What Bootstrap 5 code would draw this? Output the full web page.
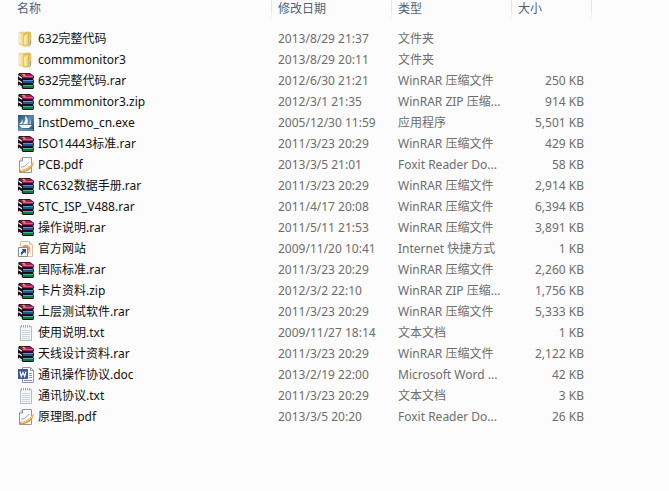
<!DOCTYPE html>
<html lang="zh-CN">
<head>
<meta charset="utf-8">
<meta name="viewport" content="width=device-width, initial-scale=1">
<title>文件列表</title>
<link href="https://cdn.jsdelivr.net/npm/bootstrap@5.3.0/dist/css/bootstrap.min.css" rel="stylesheet">
<style>
body { background: #fcfcfc; font-family: "Noto Sans", "Noto Sans CJK SC", sans-serif; font-size: 12px; line-height: 20px; }
.file-pane { padding-right: 77px; }
.file-list { table-layout: fixed; line-height: 20px; }
.file-list th, .file-list td { padding: 0 8px 0 6px; border: 0; background: transparent; white-space: nowrap; box-shadow: none; }
.file-list th { height: 28px; line-height: 18px; color: #4c607a; font-weight: 400; vertical-align: top;
  background: linear-gradient(#d9e6f2 0, #dfe9f3 10px, #fcfcfc 22px) right top / 1px 22px no-repeat; }
.file-list td { height: 21px; color: #6d6d6d; vertical-align: middle; }
.file-list th:first-child { padding-left: 17px; }
.file-list td:first-child { padding-left: 18px; color: #111; }
.col-stamp, .col-kind { width: 120px; }
.col-size { width: 80px; }
.file-icon { width: 16px; height: 16px; flex: none; }
</style>
<script src="https://cdn.jsdelivr.net/npm/bootstrap@5.3.0/dist/js/bootstrap.bundle.min.js"></script>
</head>
<body>
<svg class="position-absolute" width="0" height="0" aria-hidden="true">
  <defs>
    <linearGradient id="gold" x1="0" x2="1"><stop offset="0" stop-color="#f5e49c"/><stop offset=".6" stop-color="#f3dc80"/><stop offset="1" stop-color="#d9b64c"/></linearGradient>
    <linearGradient id="blue" x1="0" x2="1" y2="1"><stop offset="0" stop-color="#2d5375"/><stop offset=".5" stop-color="#5988ab"/><stop offset="1" stop-color="#234766"/></linearGradient>
  </defs>
  <symbol id="folder" viewBox="0 0 16 16">
    <path d="M7 1h5l1 1v8l-1 5H7z" fill="#e8cc70" stroke="#cfad55" stroke-width=".5"/>
    <path d="M1 1.5 5 1l2 1v13l-5-1-1-1z" fill="url(#gold)" stroke="#dfc570" stroke-width=".5"/>
    <path d="M6 3.5 11 2v11l-5 2.5z" fill="url(#gold)" stroke="#c9a64a" stroke-width=".5"/>
    <path d="M2 2.5v10M7 5v8" stroke="#fff8d2"/>
    <path d="M12 9.5h1v4h-1z" fill="#6fb5c9"/>
  </symbol>
  <symbol id="rar" viewBox="0 0 16 16">
    <path d="M1 0h11l4 3v2l-1 1 1 1v3l-1 1 1 1v3l-1 1H5l-5-4V9l1-1-1-1V4l1-1-1-1z" fill="#181018"/>
    <path d="M1.500.8H12L15.500 3v2H5z" fill="#a81d60"/><path d="M5 3h10v1H5z" fill="#d4608f"/>
    <path d="m1 2.500 3 2V6L1 4zM1 7l3 2v1.500l-3-2zM1 11.500l3 2V15l-3-2z" fill="#fff"/>
    <path d="m2 6 3 .5 10-.5-3-.5H5z" fill="#181018"/>
    <path d="M5 7h10.500v3H5z" fill="#1f5598"/><path d="M5 7h10v1H5z" fill="#5796cf"/>
    <path d="M5 12h10.500v3H5z" fill="#107548"/><path d="M5 12h10v1H5z" fill="#4dbb86"/>
    <path d="m4 1 2-.2L8 2.500l-2 .5z" fill="#e9b33b"/>
  </symbol>
  <symbol id="exe" viewBox="0 0 16 16">
    <path d="M0 0h16v16H0z" fill="url(#blue)"/>
    <path d="M7 1c3 2 3 5 2.500 8L5 9c2-2 3-5 2-8z" fill="#fff"/><path d="M4 4c1 2 1 4 0 5H1c2-1 3-3 3-5z" fill="#dceaf4"/>
    <path d="M1 10h13l-3 3H4z" fill="#f4f9fc"/><path d="M11 3c2 2 2 4 2 6h-2c1-2 1-4 0-6z" fill="#a9c9dd"/>
    <path d="M1 15h14" stroke="#86abc5"/>
  </symbol>
  <symbol id="pdf" viewBox="0 0 16 16">
    <path d="M4.500.5h9v15h-12V4z" fill="#fdfdfd" stroke="#8f969c"/><path d="M4.500.5V4h-3" fill="#e8eaec" stroke="#8f969c"/>
    <path d="M3 10c3 0 5-1 8-5" fill="none" stroke="#9ca8b0"/>
    <path d="M2 13c5 0 10-3 13.500-8.500C16 9 12 14 6 15H1.500z" fill="#e39a3a"/><path d="M3 13.800c5-.5 9-3 11.500-7" fill="none" stroke="#ffd783"/>
  </symbol>
  <symbol id="weblink" viewBox="0 0 16 16">
    <path d="M2.500.5h9l3 3v12h-12z" fill="#fff" stroke="#e0bda3"/><path d="M11.500.5v3h3" fill="#f7dfcf" stroke="#e0bda3"/>
    <path d="M4 5.500c2-3 7-2 8 1s-1 6-3 7c2-3 1-6-1-6.500z" fill="#ed9458"/><path d="M10 10h3M11 12h2" stroke="#f6c9a9"/>
    <path d="M.5 6.500h9v9h-9z" fill="#f8fafc" stroke="#868c94"/>
    <path d="M3.500 8H8v4.500L6.600 11C5 12 4 13 4 14.500 1.800 12.500 3 10.500 5 9.500z" fill="#1d5191"/>
  </symbol>
  <symbol id="txt" viewBox="0 0 16 16">
    <path d="M2.500 1.500h11v14h-11z" fill="#f4f7f9" stroke="#b5babd"/>
    <path d="M4 5.500h8M4 7.500h8M4 9.500h8M4 11.500h8M4 13.500h8" stroke="#cad7de"/>
    <path d="M3.500 0v2.500M5.500 0v2.500M7.500 0v2.500M9.500 0v2.500M11.500 0v2.500" stroke="#a4a9ac"/><path d="M4.500 1v1M6.500 1v1M8.500 1v1M10.500 1v1" stroke="#fff"/>
  </symbol>
  <symbol id="doc" viewBox="0 0 16 16">
    <path d="M4.500.5h8l3 3v12h-11z" fill="#fff" stroke="#8e97a3"/><path d="M12.500.5v3h3" fill="none" stroke="#8e97a3"/>
    <path d="M11 6.500h3M11 8.500h3M11 10.500h3M6 13.500h8" stroke="#8094b3"/>
    <path d="M0 2h10v10H0z" fill="#3d5a93"/><path d="m2 4.500 1.300 5L5 5.500l1.700 4L8 4.500" fill="none" stroke="#fff" stroke-width="1.200"/>
  </symbol>
</svg>

<main class="file-pane">
<table class="table table-borderless file-list mb-0">
  <colgroup><col><col class="col-stamp"><col class="col-kind"><col class="col-size"></colgroup>
  <thead><tr><th scope="col">名称</th><th scope="col">修改日期</th><th scope="col">类型</th><th scope="col">大小</th></tr></thead>
  <tbody>
  <tr><td><div class="d-flex align-items-center gap-1"><svg class="file-icon" aria-hidden="true"><use href="#folder"/></svg><span>632完整代码</span></div></td><td>2013/8/29 21:37</td><td>文件夹</td><td></td></tr>
  <tr><td><div class="d-flex align-items-center gap-1"><svg class="file-icon" aria-hidden="true"><use href="#folder"/></svg><span>commmonitor3</span></div></td><td>2013/8/29 20:11</td><td>文件夹</td><td></td></tr>
  <tr><td><div class="d-flex align-items-center gap-1"><svg class="file-icon" aria-hidden="true"><use href="#rar"/></svg><span>632完整代码.rar</span></div></td><td>2012/6/30 21:21</td><td>WinRAR 压缩文件</td><td class="text-end">250 KB</td></tr>
  <tr><td><div class="d-flex align-items-center gap-1"><svg class="file-icon" aria-hidden="true"><use href="#rar"/></svg><span>commmonitor3.zip</span></div></td><td>2012/3/1 21:35</td><td>WinRAR ZIP 压缩...</td><td class="text-end">914 KB</td></tr>
  <tr><td><div class="d-flex align-items-center gap-1"><svg class="file-icon" aria-hidden="true"><use href="#exe"/></svg><span>InstDemo_cn.exe</span></div></td><td>2005/12/30 11:59</td><td>应用程序</td><td class="text-end">5,501 KB</td></tr>
  <tr><td><div class="d-flex align-items-center gap-1"><svg class="file-icon" aria-hidden="true"><use href="#rar"/></svg><span>ISO14443标准.rar</span></div></td><td>2011/3/23 20:29</td><td>WinRAR 压缩文件</td><td class="text-end">429 KB</td></tr>
  <tr><td><div class="d-flex align-items-center gap-1"><svg class="file-icon" aria-hidden="true"><use href="#pdf"/></svg><span>PCB.pdf</span></div></td><td>2013/3/5 21:01</td><td>Foxit Reader Do...</td><td class="text-end">58 KB</td></tr>
  <tr><td><div class="d-flex align-items-center gap-1"><svg class="file-icon" aria-hidden="true"><use href="#rar"/></svg><span>RC632数据手册.rar</span></div></td><td>2011/3/23 20:29</td><td>WinRAR 压缩文件</td><td class="text-end">2,914 KB</td></tr>
  <tr><td><div class="d-flex align-items-center gap-1"><svg class="file-icon" aria-hidden="true"><use href="#rar"/></svg><span>STC_ISP_V488.rar</span></div></td><td>2011/4/17 20:08</td><td>WinRAR 压缩文件</td><td class="text-end">6,394 KB</td></tr>
  <tr><td><div class="d-flex align-items-center gap-1"><svg class="file-icon" aria-hidden="true"><use href="#rar"/></svg><span>操作说明.rar</span></div></td><td>2011/5/11 21:53</td><td>WinRAR 压缩文件</td><td class="text-end">3,891 KB</td></tr>
  <tr><td><div class="d-flex align-items-center gap-1"><svg class="file-icon" aria-hidden="true"><use href="#weblink"/></svg><span>官方网站</span></div></td><td>2009/11/20 10:41</td><td>Internet 快捷方式</td><td class="text-end">1 KB</td></tr>
  <tr><td><div class="d-flex align-items-center gap-1"><svg class="file-icon" aria-hidden="true"><use href="#rar"/></svg><span>国际标准.rar</span></div></td><td>2011/3/23 20:29</td><td>WinRAR 压缩文件</td><td class="text-end">2,260 KB</td></tr>
  <tr><td><div class="d-flex align-items-center gap-1"><svg class="file-icon" aria-hidden="true"><use href="#rar"/></svg><span>卡片资料.zip</span></div></td><td>2012/3/2 22:10</td><td>WinRAR ZIP 压缩...</td><td class="text-end">1,756 KB</td></tr>
  <tr><td><div class="d-flex align-items-center gap-1"><svg class="file-icon" aria-hidden="true"><use href="#rar"/></svg><span>上层测试软件.rar</span></div></td><td>2011/3/23 20:29</td><td>WinRAR 压缩文件</td><td class="text-end">5,333 KB</td></tr>
  <tr><td><div class="d-flex align-items-center gap-1"><svg class="file-icon" aria-hidden="true"><use href="#txt"/></svg><span>使用说明.txt</span></div></td><td>2009/11/27 18:14</td><td>文本文档</td><td class="text-end">1 KB</td></tr>
  <tr><td><div class="d-flex align-items-center gap-1"><svg class="file-icon" aria-hidden="true"><use href="#rar"/></svg><span>天线设计资料.rar</span></div></td><td>2011/3/23 20:29</td><td>WinRAR 压缩文件</td><td class="text-end">2,122 KB</td></tr>
  <tr><td><div class="d-flex align-items-center gap-1"><svg class="file-icon" aria-hidden="true"><use href="#doc"/></svg><span>通讯操作协议.doc</span></div></td><td>2013/2/19 22:00</td><td>Microsoft Word ...</td><td class="text-end">42 KB</td></tr>
  <tr><td><div class="d-flex align-items-center gap-1"><svg class="file-icon" aria-hidden="true"><use href="#txt"/></svg><span>通讯协议.txt</span></div></td><td>2011/3/23 20:29</td><td>文本文档</td><td class="text-end">3 KB</td></tr>
  <tr><td><div class="d-flex align-items-center gap-1"><svg class="file-icon" aria-hidden="true"><use href="#pdf"/></svg><span>原理图.pdf</span></div></td><td>2013/3/5 20:20</td><td>Foxit Reader Do...</td><td class="text-end">26 KB</td></tr>
  </tbody>
</table>
</main>
</body>
</html>
